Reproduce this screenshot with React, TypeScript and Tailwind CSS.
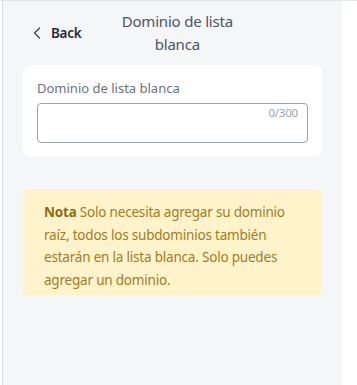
import React, { useState } from "react";

const font = { fontFamily: '"Noto Sans", "Liberation Sans", sans-serif' };

function ChevronLeft() {
  return (
    <svg width="8" height="12" viewBox="0 0 8 12" fill="none" className="shrink-0">
      <path d="M6.5 1L1.5 6l5 5" stroke="#374151" strokeWidth="1.2" strokeLinecap="round" strokeLinejoin="round" />
    </svg>
  );
}

export default function App() {
  const [value, setValue] = useState("");

  return (
    <div className="w-[357px] h-[385px] bg-white border-t border-[#e3e5ea] flex" style={font}>
      <div className="w-[2px]" />
      <div className="w-[340px] h-full bg-[#f5f6f8] border-l border-[#d9dbe3] flex flex-col">
        <div className="flex items-center h-[64px] pl-[30px]">
          <button className="flex items-center gap-[10px] text-[13.5px] tracking-[-0.3px] font-semibold text-[#1f2937]">
            <ChevronLeft />
            Back
          </button>
          <h1 className="ml-[23px] w-[146px] text-center text-[15px] tracking-[-0.2px] leading-[23px] text-[#4b5563] font-normal">
            Dominio de lista blanca
          </h1>
        </div>

        <div className="mx-[20px] bg-white rounded-lg px-[14px] pt-[14px] pb-[14px]">
          <label className="block text-[13px] leading-[18px] text-[#6b7280] mb-[6px]">
            Dominio de lista blanca
          </label>
          <div className="relative">
            <textarea
              value={value}
              onChange={(e) => setValue(e.target.value.slice(0, 300))}
              className="block w-full h-[40px] border border-[#9ca3af] rounded-[4px] resize-none outline-none px-2 py-1 text-[13px]"
            />
            <span className="absolute right-[10px] top-[1px] text-[11.5px] tracking-[-0.2px] text-[#9ca3af]">
              {value.length}/300
            </span>
          </div>
        </div>

        <div className="mx-[20px] mt-[32px] bg-[#fff3cc] rounded-[4px] px-[21px] pt-[12px] pb-[3px] text-[13.5px] tracking-[-0.2px] leading-[22.7px] text-[#a27c22]">
          <span className="font-bold text-[#8f6b14]">Nota</span> Solo necesita agregar su dominio
          raíz, todos los subdominios también estarán en la lista blanca. Solo puedes agregar un dominio.
        </div>
      </div>
    </div>
  );
}
